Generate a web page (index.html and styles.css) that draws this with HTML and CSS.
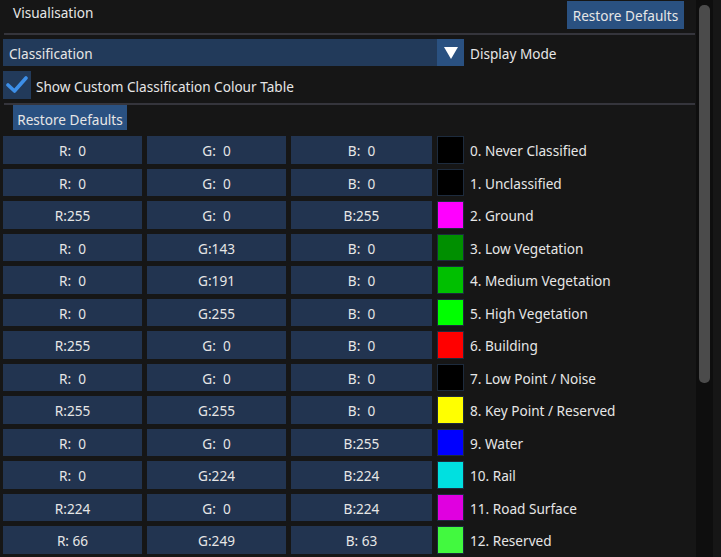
FILE: index.html
```html
<!DOCTYPE html>
<html>
<head>
<meta charset="utf-8">
<link rel="stylesheet" href="styles.css">
</head>
<body>
<div class="window">
  <div class="content">
    <div class="header">
      <span class="title">Visualisation</span>
      <button class="btn btn-top">Restore Defaults</button>
    </div>
    <div class="sep"></div>
    <div class="combo-row">
      <div class="combo">
        <span class="combo-text">Classification</span>
        <span class="combo-arrow"><svg width="14" height="12" viewBox="0 0 14 12"><path d="M0 0 H14 L7 12 Z" fill="#ffffff"/></svg></span>
      </div>
      <span class="label">Display Mode</span>
    </div>
    <div class="check-row">
      <span class="checkbox"><svg width="22" height="20" viewBox="0 0 22 20"><path d="M2 10 L8.5 16 L20 3" fill="none" stroke="#3d8fe8" stroke-width="3.6" stroke-linecap="round" stroke-linejoin="round"/></svg></span>
      <span class="label">Show Custom Classification Colour Table</span>
    </div>
    <div class="sep sep2"></div>
    <button class="btn btn-small">Restore Defaults</button>
    <div class="grid">
      <div class="cell">R:  0</div><div class="cell">G:  0</div><div class="cell">B:  0</div><div class="swatch" style="background:#000000"></div><div class="name">0. Never Classified</div>
      <div class="cell">R:  0</div><div class="cell">G:  0</div><div class="cell">B:  0</div><div class="swatch" style="background:#000000"></div><div class="name">1. Unclassified</div>
      <div class="cell">R:255</div><div class="cell">G:  0</div><div class="cell">B:255</div><div class="swatch" style="background:#ff00ff"></div><div class="name">2. Ground</div>
      <div class="cell">R:  0</div><div class="cell">G:143</div><div class="cell">B:  0</div><div class="swatch" style="background:#008f00"></div><div class="name">3. Low Vegetation</div>
      <div class="cell">R:  0</div><div class="cell">G:191</div><div class="cell">B:  0</div><div class="swatch" style="background:#00bf00"></div><div class="name">4. Medium Vegetation</div>
      <div class="cell">R:  0</div><div class="cell">G:255</div><div class="cell">B:  0</div><div class="swatch" style="background:#00ff00"></div><div class="name">5. High Vegetation</div>
      <div class="cell">R:255</div><div class="cell">G:  0</div><div class="cell">B:  0</div><div class="swatch" style="background:#ff0000"></div><div class="name">6. Building</div>
      <div class="cell">R:  0</div><div class="cell">G:  0</div><div class="cell">B:  0</div><div class="swatch" style="background:#000000"></div><div class="name">7. Low Point / Noise</div>
      <div class="cell">R:255</div><div class="cell">G:255</div><div class="cell">B:  0</div><div class="swatch" style="background:#ffff00"></div><div class="name">8. Key Point / Reserved</div>
      <div class="cell">R:  0</div><div class="cell">G:  0</div><div class="cell">B:255</div><div class="swatch" style="background:#0000ff"></div><div class="name">9. Water</div>
      <div class="cell">R:  0</div><div class="cell">G:224</div><div class="cell">B:224</div><div class="swatch" style="background:#00e0e0"></div><div class="name">10. Rail</div>
      <div class="cell">R:224</div><div class="cell">G:  0</div><div class="cell">B:224</div><div class="swatch" style="background:#e000e0"></div><div class="name">11. Road Surface</div>
      <div class="cell">R: 66</div><div class="cell">G:249</div><div class="cell">B: 63</div><div class="swatch" style="background:#42f93f"></div><div class="name">12. Reserved</div>
    </div>
  </div>
  <div class="scrollbar"><div class="thumb"></div></div>
</div>
</body>
</html>
```
FILE: styles.css
```css
html, body {
  margin: 0;
  padding: 0;
  background: #161616;
}
body {
  width: 721px;
  height: 557px;
  overflow: hidden;
  font-family: "Noto Sans", "DejaVu Sans", sans-serif;
  font-size: 13.6px;
  color: #e6e6e6;
}
.window {
  display: flex;
  height: 557px;
}
.content {
  width: 696px;
  flex: none;
}
.scrollbar {
  width: 17px;
  height: 557px;
  background: #0e0e0e;
  flex: none;
  padding-top: 5px;
  box-sizing: border-box;
}
.thumb {
  width: 11px;
  margin-left: 3px;
  height: 378px;
  background: #4b4b4b;
  border-radius: 5px;
}
.header {
  height: 30px;
  display: flex;
  align-items: flex-start;
  justify-content: space-between;
}
.title {
  padding-left: 13px;
  line-height: 26px;
}
.btn {
  font-family: inherit;
  font-size: 13.6px;
  color: #e6e6e6;
  background: #2a5181;
  border: none;
  padding: 1px 0 0 0;
  margin: 0;
}
.btn-top {
  margin-top: 1px;
  margin-right: 12px;
  width: 117px;
  height: 28px;
}
.sep {
  height: 2px;
  background: #35353c;
  margin: 3px 1px 0 4px;
}
.combo-row {
  display: flex;
  align-items: center;
  margin-top: 4px;
  height: 27px;
  padding-top: 1px;
  box-sizing: border-box;
}
.combo {
  margin-left: 3px;
  width: 461px;
  height: 27px;
  background: #223a5a;
  display: flex;
  align-items: center;
  margin-top: -1px;
}
.combo-text {
  flex: 1;
  padding-left: 6px;
  padding-top: 2px;
}
.combo-arrow {
  width: 27px;
  height: 27px;
  background: #2a5181;
  display: flex;
  align-items: center;
  justify-content: center;
}
.label {
  margin-left: 6px;
  padding-top: 1px;
}
.check-row {
  display: flex;
  align-items: center;
  margin-top: 5px;
  height: 28px;
}
.checkbox {
  margin-left: 3px;
  width: 28px;
  height: 28px;
  background: #223a5a;
  display: flex;
  align-items: center;
  justify-content: center;
}
.check-row .label {
  margin-left: 5px;
  padding-top: 2px;
}
.sep2 {
  margin-top: 4px;
}
.btn-small {
  display: block;
  margin-left: 13px;
  width: 114px;
  height: 25px;
  padding-top: 3px;
}
.grid {
  margin-top: 6px;
  margin-left: 3px;
  display: grid;
  grid-template-columns: 139px 139px 141px 27px auto;
  grid-auto-rows: 27.5px;
  column-gap: 5px;
  row-gap: 5px;
}
.cell {
  background: #223450;
  white-space: pre;
  text-align: center;
  line-height: 27.5px;
  padding-top: 1px;
  box-sizing: border-box;
}
.swatch {
  box-sizing: border-box;
  border: 1px solid #1d2b3d;
}
.name {
  margin-left: 1px;
  line-height: 27.5px;
  padding-top: 1px;
  white-space: nowrap;
}
```
